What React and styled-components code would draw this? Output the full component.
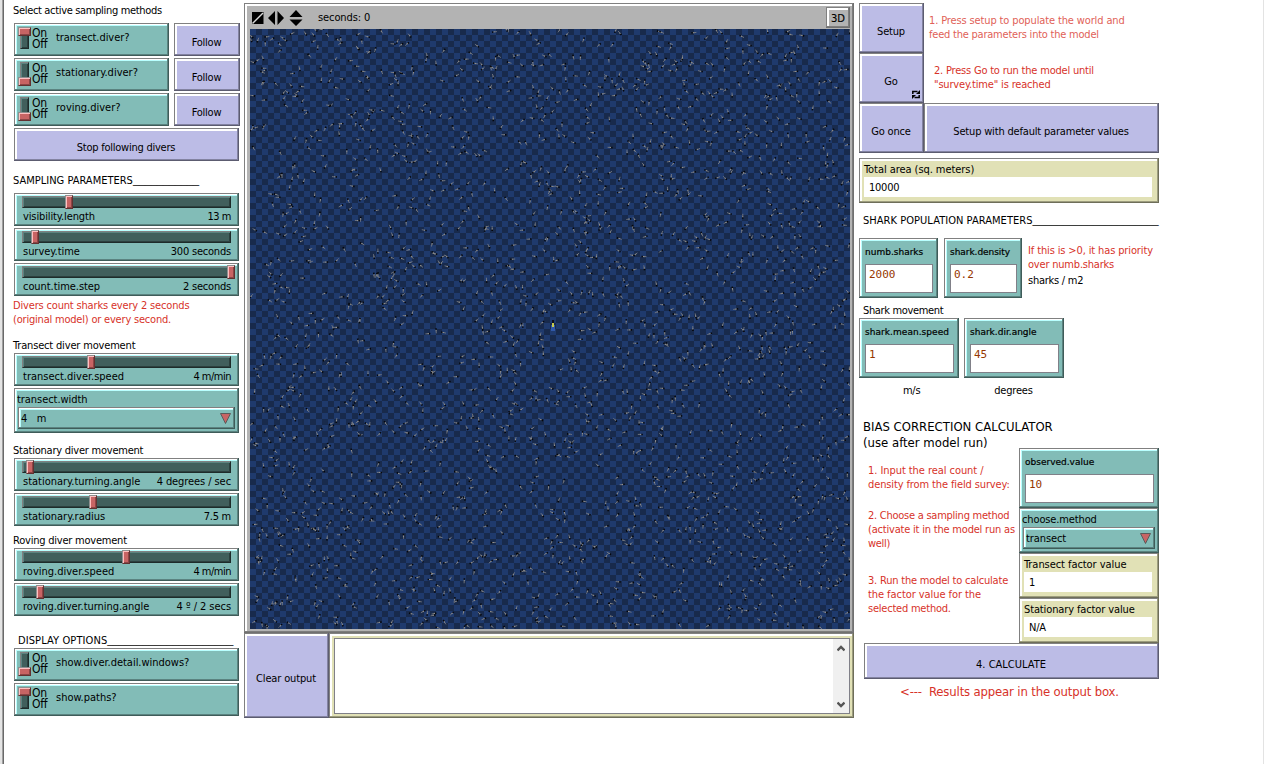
import React from 'react';
import styled, { createGlobalStyle } from 'styled-components';

const Global = createGlobalStyle`
  body { margin: 0; background: #fff; overflow: hidden; }
  * { box-sizing: border-box; }
`;

const palettes = {
  teal: { bg: '#82bcb7', hi: '#b9ffff', hi2: '#ffffff', lo: '#5b8380', lo2: '#3f5c59' },
  lilac: { bg: '#bcbce6', hi: '#ffffff', hi2: '#ffffff', lo: '#8383a1', lo2: '#5c5c70' },
  sand: { bg: '#e1e1b6', hi: '#ffffff', hi2: '#ffffff', lo: '#9d9d7f', lo2: '#6e6e59' },
  gray: { bg: '#b3b3b3', hi: '#ffffff', hi2: '#ffffff', lo: '#7d7d7d', lo2: '#707070' },
};

const bevel = ({ $tone = 'teal' }) => {
  const p = palettes[$tone];
  return `
    background: ${p.bg};
    box-shadow: inset -1px -1px ${p.lo2}, inset 1px 1px #808080,
      inset -2px -2px ${p.lo}, inset 2px 2px ${p.hi2}, inset 3px 3px ${p.hi};
  `;
};

const Page = styled.div`
  display: flex;
  align-items: flex-start;
  width: 1264px;
  height: 764px;
  overflow: hidden;
  font: 11px/14px 'DejaVu Sans Condensed', 'DejaVu Sans', sans-serif;
  font-stretch: condensed;
  color: #000;
  white-space: pre;
`;

const Edge = styled.div`
  width: 4px;
  height: 100%;
  background: #e4e4e4;
  border-right: 1px solid #696969;
  box-shadow: inset -1px 0 #a0a0a0;
`;

const FarEdge = styled.div`
  width: 1px;
  height: 100%;
  margin-left: auto;
  background: #e3e3e3;
`;

const Column = styled.div`
  display: flex;
  flex-direction: column;
  flex: none;
  width: ${(p) => p.$w}px;
  margin-left: ${(p) => p.$ml}px;
  padding-top: 3px;
`;

const Row = styled.div`
  display: flex;
  align-items: flex-start;
  gap: ${(p) => p.$gap || 0}px;
  margin-top: ${(p) => p.$mt || 0}px;
`;

const Stack = styled.div`
  display: flex;
  flex-direction: column;
  flex: none;
  gap: ${(p) => p.$gap || 0}px;
  width: ${(p) => (p.$w ? `${p.$w}px` : 'auto')};
  margin-top: ${(p) => p.$mt || 0}px;
`;

const Note = styled.div`
  flex: none;
  margin: ${(p) => p.$mt || 0}px 0 -1px ${(p) => p.$ml || 0}px;
  padding-top: 1px;
  color: ${(p) => p.$color || '#000'};
  font-size: ${(p) => (p.$big ? 13 : 11)}px;
  line-height: ${(p) => (p.$big ? 16 : 14)}px;
  letter-spacing: ${(p) => p.$ls || 0}px;
`;

const Line = styled.div`
  letter-spacing: ${(p) => p.$ls || 0}px;
`;

const Rule = styled.span`
  font-family: 'Liberation Sans', sans-serif;
  letter-spacing: -0.118px;
  line-height: 0;
`;

const Button = styled.div`
  ${bevel}
  display: flex;
  align-items: center;
  justify-content: center;
  flex: none;
  position: relative;
  width: ${(p) => p.$w}px;
  height: ${(p) => p.$h}px;
  padding: ${(p) => p.$drop || 0}px 1px 0 0;
  letter-spacing: ${(p) => p.$ls || 0}px;
`;

const Forever = styled.svg`
  position: absolute;
  right: 4px;
  bottom: 4px;
`;

const SwitchBox = styled.div`
  ${bevel}
  display: flex;
  flex: none;
  width: ${(p) => p.$w}px;
  height: 33px;
  padding: 4px 0 0 6px;
`;

const SwitchGroove = styled.div`
  position: relative;
  width: 9px;
  height: 22px;
  background: #415f5c;
  border: 1px solid;
  border-color: #808080 #1e2b2a #1e2b2a #808080;
  box-shadow: inset 1px 1px #5b8380, inset -1px -1px #2c403e;
`;

const Knob = styled.div`
  position: absolute;
  left: -3px;
  top: ${(p) => (p.$on ? -1 : 14)}px;
  width: 13px;
  height: 9px;
  background: #c86464;
  border: 1px solid;
  border-color: #8f8f8f #623131 #623131 #8f8f8f;
  box-shadow: inset 1px 1px #ffc0c0, inset -1px -1px #8c4646;
`;

const States = styled.div`
  width: 24px;
  margin: 1px 0 0 3px;
  font-size: 12px;
  line-height: 11px;
  letter-spacing: -0.3px;
`;

const SwitchName = styled.div`
  margin-top: 4px;
  letter-spacing: ${(p) => p.$ls || 0}px;
`;

const SliderBox = styled.div`
  ${bevel}
  height: 33px;
  padding: 3px 8px 0 8px;
`;

const Track = styled.div`
  position: relative;
  height: 12px;
  background: #415f5c;
  border: 1px solid;
  border-color: #808080 #1e2b2a #1e2b2a #808080;
  box-shadow: inset 1px 1px #5b8380, inset -1px -1px #2c403e;
`;

const Thumb = styled.div`
  position: absolute;
  top: -2px;
  left: ${(p) => p.$at}px;
  width: 8px;
  height: 14px;
  background: #c86464;
  border: 1px solid;
  border-color: #8f8f8f #623131 #623131 #8f8f8f;
  box-shadow: inset 1px 1px #ffc0c0, inset -1px -1px #8c4646;
`;

const Caption = styled.div`
  display: flex;
  justify-content: space-between;
  padding: 2px 0 0 1px;
`;

const Tracked = styled.span`
  letter-spacing: ${(p) => p.$ls || 0}px;
`;

const ChooserBox = styled.div`
  ${bevel}
  height: 45px;
  padding: 5px 4px 0 3px;
`;

const ChooserField = styled.div`
  ${bevel}
  display: flex;
  justify-content: space-between;
  height: 22px;
  margin: 0 0 0 1px;
  padding: 5px 4px 0 3px;
`;

const ChooserArrow = styled.svg`
  display: block;
  margin-top: 1px;
`;

const MonitorBox = styled.div`
  ${bevel}
  height: 45px;
  padding: 5px 7px 0 5px;
`;

const MonitorValue = styled.div`
  height: 20px;
  padding: 4px 0 0 5px;
  background: #fff;
  letter-spacing: -0.25px;
`;

const InputBox = styled.div`
  ${bevel}
  flex: none;
  width: ${(p) => p.$w}px;
  height: 60px;
  padding: 8px 5px 0 6px;
`;

const InputName = styled.div`
  font: 9px/13px 'DejaVu Sans', sans-serif;
  letter-spacing: ${(p) => p.$ls || 0}px;
  -webkit-text-stroke: 0.2px #000;
`;

const InputValue = styled.div`
  height: 29px;
  margin-top: 5px;
  padding: 3px 0 0 3px;
  background: #fff;
  border: 1px solid #808088;
  color: #963700;
  font: 11px/14px 'DejaVu Sans Mono', monospace;
`;

const World = styled.div`
  ${bevel}
  height: 630px;
  padding: 4px;
  padding-left: 6px;
`;

const WorldBar = styled.div`
  display: flex;
  align-items: center;
  height: 22px;
  padding-left: 2px;
`;

const Ticks = styled.div`
  flex: 1;
  margin-left: 14px;
  letter-spacing: -0.1px;
`;

const Button3D = styled.div`
  ${bevel}
  width: 24px;
  height: 21px;
  margin-top: -1px;
  font: 10px/23px 'DejaVu Sans', sans-serif;
  -webkit-text-stroke: 0.15px #000;
  text-align: center;
`;

const View = styled.svg`
  display: block;
`;

const OutputFrame = styled.div`
  ${bevel}
  flex: 1;
  height: 85px;
  padding: 5px 4px 4px 5px;
`;

const OutputArea = styled.div`
  display: flex;
  justify-content: flex-end;
  height: 76px;
  background: #fff;
  border: 1px solid #808088;
`;

const ScrollBar = styled.div`
  display: flex;
  flex-direction: column;
  align-items: center;
  justify-content: space-between;
  width: 16px;
  padding: 6px 0 5px;
  background: #f0f0f0;
`;

const RED = '#d73229';
const SOFT_RED = '#df5f58';

function Lines({ rows, ...rest }) {
  return (
    <Note {...rest}>
      {rows.map(([text, ls]) => <Line key={text} $ls={ls}>{text}</Line>)}
    </Note>
  );
}

function Switch({ w = 225, name, on, ls }) {
  return (
    <SwitchBox $w={w}>
      <SwitchGroove><Knob $on={on} /></SwitchGroove>
      <States>{'On\nOff'}</States>
      <SwitchName $ls={ls}>{name}</SwitchName>
    </SwitchBox>
  );
}

function Slider({ name, value, at, ls, vls }) {
  return (
    <SliderBox>
      <Track><Thumb $at={at} /></Track>
      <Caption><Tracked $ls={ls}>{name}</Tracked><Tracked $ls={vls}>{value}</Tracked></Caption>
    </SliderBox>
  );
}

function Chooser({ name, value, ls, vls }) {
  return (
    <ChooserBox>
      <Line $ls={ls}>{name}</Line>
      <ChooserField>
        <Tracked $ls={vls}>{value}</Tracked>
        <ChooserArrow width="11" height="11">
          <path d="M0.5 0.5H10.5L5.5 10.5Z" fill="#c86464" stroke="#5a5a5a" />
        </ChooserArrow>
      </ChooserField>
    </ChooserBox>
  );
}

function Monitor({ name, value, ls }) {
  return (
    <MonitorBox $tone="sand">
      <Line $ls={ls}>{name}</Line>
      <MonitorValue>{value}</MonitorValue>
    </MonitorBox>
  );
}

function Input({ w, name, value, ls }) {
  return (
    <InputBox $w={w}>
      <InputName $ls={ls}>{name}</InputName>
      <InputValue>{value}</InputValue>
    </InputBox>
  );
}

function makeSharks(count) {
  let seed = 20117;
  const rnd = () => {
    seed = (seed * 1664525 + 1013904223) % 4294967296;
    return seed / 4294967296;
  };
  let bodies = '';
  let tails = '';
  let heads = '';
  for (let i = 0; i < count; i += 1) {
    const x = rnd() * 600;
    const y = rnd() * 600;
    const a = rnd() * Math.PI * 2;
    const dx = Math.cos(a);
    const dy = Math.sin(a);
    const at = (k) => `${(x + dx * k).toFixed(1)} ${(y + dy * k).toFixed(1)}`;
    heads += `M${at(0.8)}L${at(2.2)}`;
    bodies += `M${at(-1)}L${at(0.8)}`;
    tails += `M${at(-2.8)}L${at(-1)}`;
  }
  return { bodies, tails, heads };
}

const sharks = makeSharks(2000);

function Ocean() {
  return (
    <View width="600" height="600" viewBox="0 0 600 600">
      <defs>
        <pattern id="patches" width="12" height="12" patternUnits="userSpaceOnUse">
          <rect width="12" height="12" fill="#1f3a6d" />
          <path d="M6 0h6v6h-6zM0 6h6v6h-6z" fill="#182a4c" />
        </pattern>
      </defs>
      <rect width="600" height="600" fill="url(#patches)" />
      <g fill="none">
        <path d={sharks.tails} stroke="#808286" strokeWidth="0.8" />
        <path d={sharks.bodies} stroke="#908e8a" strokeWidth="1.1" />
        <path d={sharks.heads} stroke="#05070c" strokeWidth="1.6" />
      </g>
      <rect x="301" y="296" width="4" height="6" fill="#3058a8" />
      <rect x="302" y="291" width="2" height="3" fill="#0a0f1a" />
      <rect x="302" y="294" width="2" height="4" fill="#c8cc50" />
    </View>
  );
}

export default function App() {
  return (
    <>
      <Global />
      <Page>
        <Edge />
        <Column $w={226} $ml={10}>
          <Note $ml={-1} $ls={-0.33}>Select active sampling methods</Note>
          <Stack $gap={2} $mt={6}>
            <Row $gap={5}>
              <Switch w={155} name="transect.diver?" ls={-0.06} on />
              <Button $tone="lilac" $w={66} $h={33} $drop={6} $ls={-0.25}>Follow</Button>
            </Row>
            <Row $gap={5}>
              <Switch w={155} name="stationary.diver?" />
              <Button $tone="lilac" $w={66} $h={33} $drop={6} $ls={-0.25}>Follow</Button>
            </Row>
            <Row $gap={5}>
              <Switch w={155} name="roving.diver?" />
              <Button $tone="lilac" $w={66} $h={33} $drop={6} $ls={-0.25}>Follow</Button>
            </Row>
            <Button $tone="lilac" $w={225} $h={33} $drop={6} $ls={-0.24}>Stop following divers</Button>
          </Stack>
          <Note $ml={-1} $mt={12}>SAMPLING PARAMETERS<Rule>{'_'.repeat(11)}</Rule></Note>
          <Stack $gap={2} $mt={6} $w={225}>
            <Slider name="visibility.length" value="13 m" at={42} ls={-0.12} vls={-0.45} />
            <Slider name="survey.time" value="300 seconds" at={8} ls={-0.03} vls={-0.2} />
            <Slider name="count.time.step" value="2 seconds" at={204} ls={-0.06} vls={-0.2} />
          </Stack>
          <Lines
            $ml={-1}
            $mt={2}
            $color={RED}
            rows={[['Divers count sharks every 2 seconds', -0.17], ['(original model) or every second.', -0.2]]}
          />
          <Note $ml={-1} $mt={12} $ls={-0.17}>Transect diver movement</Note>
          <Stack $gap={2} $mt={1} $w={225}>
            <Slider name="transect.diver.speed" value="4 m/min" at={64} vls={-0.5} />
            <Chooser name="transect.width" value="4   m" ls={-0.05} />
          </Stack>
          <Note $ml={-1} $mt={10} $ls={-0.23}>Stationary diver movement</Note>
          <Stack $gap={2} $mt={1} $w={225}>
            <Slider name="stationary.turning.angle" value="4 degrees / sec" at={3} ls={-0.02} vls={-0.08} />
            <Slider name="stationary.radius" value="7.5 m" at={66} vls={-0.25} />
          </Stack>
          <Note $ml={-1} $mt={7} $ls={-0.22}>Roving diver movement</Note>
          <Stack $gap={2} $mt={1} $w={225}>
            <Slider name="roving.diver.speed" value="4 m/min" at={99} vls={-0.5} />
            <Slider name="roving.diver.turning.angle" value="4 º / 2 secs" at={13} ls={-0.05} vls={-0.05} />
          </Stack>
          <Note $ml={4} $mt={17}><Tracked $ls={0.1}>DISPLAY OPTIONS</Tracked><Rule>{'_'.repeat(21)}</Rule></Note>
          <Stack $gap={2} $mt={1}>
            <Switch name="show.diver.detail.windows?" ls={-0.02} />
            <Switch name="show.paths?" on />
          </Stack>
        </Column>

        <Column $w={610} $ml={4}>
          <World $tone="gray">
            <WorldBar>
              <svg width="52" height="18" viewBox="0 0 52 18">
                <path d="M0 3h11.5v12H0z" />
                <path d="M0.5 14.5L11 4" stroke="#d8d8d8" strokeWidth="1.5" />
                <path d="M16 9L23 2V16ZM25.5 2V16L32 9Z" />
                <path d="M37.5 8L44 1L50.5 8ZM37.5 10.5H50.5L44 17Z" />
              </svg>
              <Ticks>seconds: 0</Ticks>
              <Button3D $tone="gray">3D</Button3D>
            </WorldBar>
            <Ocean />
          </World>
          <Row>
            <Button $tone="lilac" $w={85} $h={85} $drop={6} $ls={-0.15}>Clear output</Button>
            <OutputFrame $tone="sand">
              <OutputArea>
                <ScrollBar>
                  <svg width="8" height="7"><path d="M0.5 5.5L4 2L7.5 5.5" fill="none" stroke="#555" strokeWidth="2.4" /></svg>
                  <svg width="8" height="7"><path d="M0.5 1.5L4 5L7.5 1.5" fill="none" stroke="#555" strokeWidth="2.4" /></svg>
                </ScrollBar>
              </OutputArea>
            </OutputFrame>
          </Row>
        </Column>

        <Column $w={300} $ml={5}>
          <Row>
            <Stack $w={65}>
              <Button $tone="lilac" $w={65} $h={50} $drop={7} $ls={-0.2}>Setup</Button>
              <Button $tone="lilac" $w={65} $h={50} $drop={7}>
                Go
                <Forever width="8" height="9" viewBox="0 0 8 9">
                  <path d="M0.8 4V1.5H5.5M7.2 5V7.5H2.5" fill="none" stroke="#000" strokeWidth="1.5" />
                  <path d="M4 4H8V0ZM4 5H0V9Z" />
                </Forever>
              </Button>
            </Stack>
            <Stack>
              <Lines
                $ml={5}
                $mt={10}
                $color={SOFT_RED}
                rows={[['1. Press setup to populate the world and', -0.13], ['feed the parameters into the model', -0.22]]}
              />
              <Lines
                $ml={10}
                $mt={22}
                $color={RED}
                rows={[['2. Press Go to run the model until', -0.2], ['"survey.time" is reached', -0.17]]}
              />
            </Stack>
          </Row>
          <Row>
            <Button $tone="lilac" $w={65} $h={50} $drop={7} $ls={-0.2}>Go once</Button>
            <Button $tone="lilac" $w={235} $h={50} $drop={7} $ls={-0.18}>Setup with default parameter values</Button>
          </Row>
          <Stack $mt={5}>
            <Monitor name="Total area (sq. meters)" value="10000" ls={-0.06} />
          </Stack>
          <Note $ml={4} $mt={10}><Tracked $ls={0.04}>SHARK POPULATION PARAMETERS</Tracked><Rule>{'_'.repeat(21)}</Rule></Note>
          <Row $mt={11} $gap={6}>
            <Input w={79} name="numb.sharks" value="2000" />
            <Input w={78} name="shark.density" value="0.2" ls={-0.05} />
            <Stack>
              <Lines
                $mt={5}
                $color={RED}
                rows={[['If this is >0, it has priority', -0.13], ['over numb.sharks', -0.2]]}
              />
              <Note $mt={2} $ls={-0.25}>sharks / m2</Note>
            </Stack>
          </Row>
          <Note $ml={4} $mt={5} $ls={-0.35}>Shark movement</Note>
          <Row $mt={1} $gap={5}>
            <Input w={100} name="shark.mean.speed" value="1" ls={0.05} />
            <Input w={100} name="shark.dir.angle" value="45" />
          </Row>
          <Row $mt={5}>
            <Note $ml={44} $ls={-0.3}>m/s</Note>
            <Note $ml={74} $ls={-0.2}>degrees</Note>
          </Row>
          <Note $big $ml={4} $mt={21}>{'BIAS CORRECTION CALCULATOR\n(use after model run)'}</Note>
          <Row $mt={-2}>
            <Stack $w={160}>
              <Lines
                $ml={9}
                $mt={15}
                $color={RED}
                rows={[['1. Input the real count /', -0.06], ['density from the field survey:', -0.12]]}
              />
              <Lines
                $ml={9}
                $mt={17}
                $color={RED}
                rows={[['2. Choose a sampling method', -0.25], ['(activate it in the model run as', -0.2], ['well)', -0.3]]}
              />
              <Lines
                $ml={9}
                $mt={23}
                $color={RED}
                rows={[['3. Run the model to calculate', -0.2], ['the factor value for the', -0.07], ['selected method.', -0.22]]}
              />
            </Stack>
            <Stack $w={140}>
              <Input w={140} name="observed.value" value="10" />
              <Chooser name="choose.method" value="transect" ls={-0.13} vls={-0.1} />
              <Monitor name="Transect factor value" value="1" ls={-0.06} />
              <Monitor name="Stationary factor value" value="N/A" ls={-0.12} />
            </Stack>
          </Row>
          <Row>
            <Note $ml={5} />
            <Button $tone="lilac" $w={295} $h={36} $drop={7}>4. CALCULATE</Button>
          </Row>
          <Note $big $ml={41} $mt={4} $color={RED} $ls={-0.16}>{'<---  Results appear in the output box.'}</Note>
        </Column>
        <FarEdge />
      </Page>
    </>
  );
}
